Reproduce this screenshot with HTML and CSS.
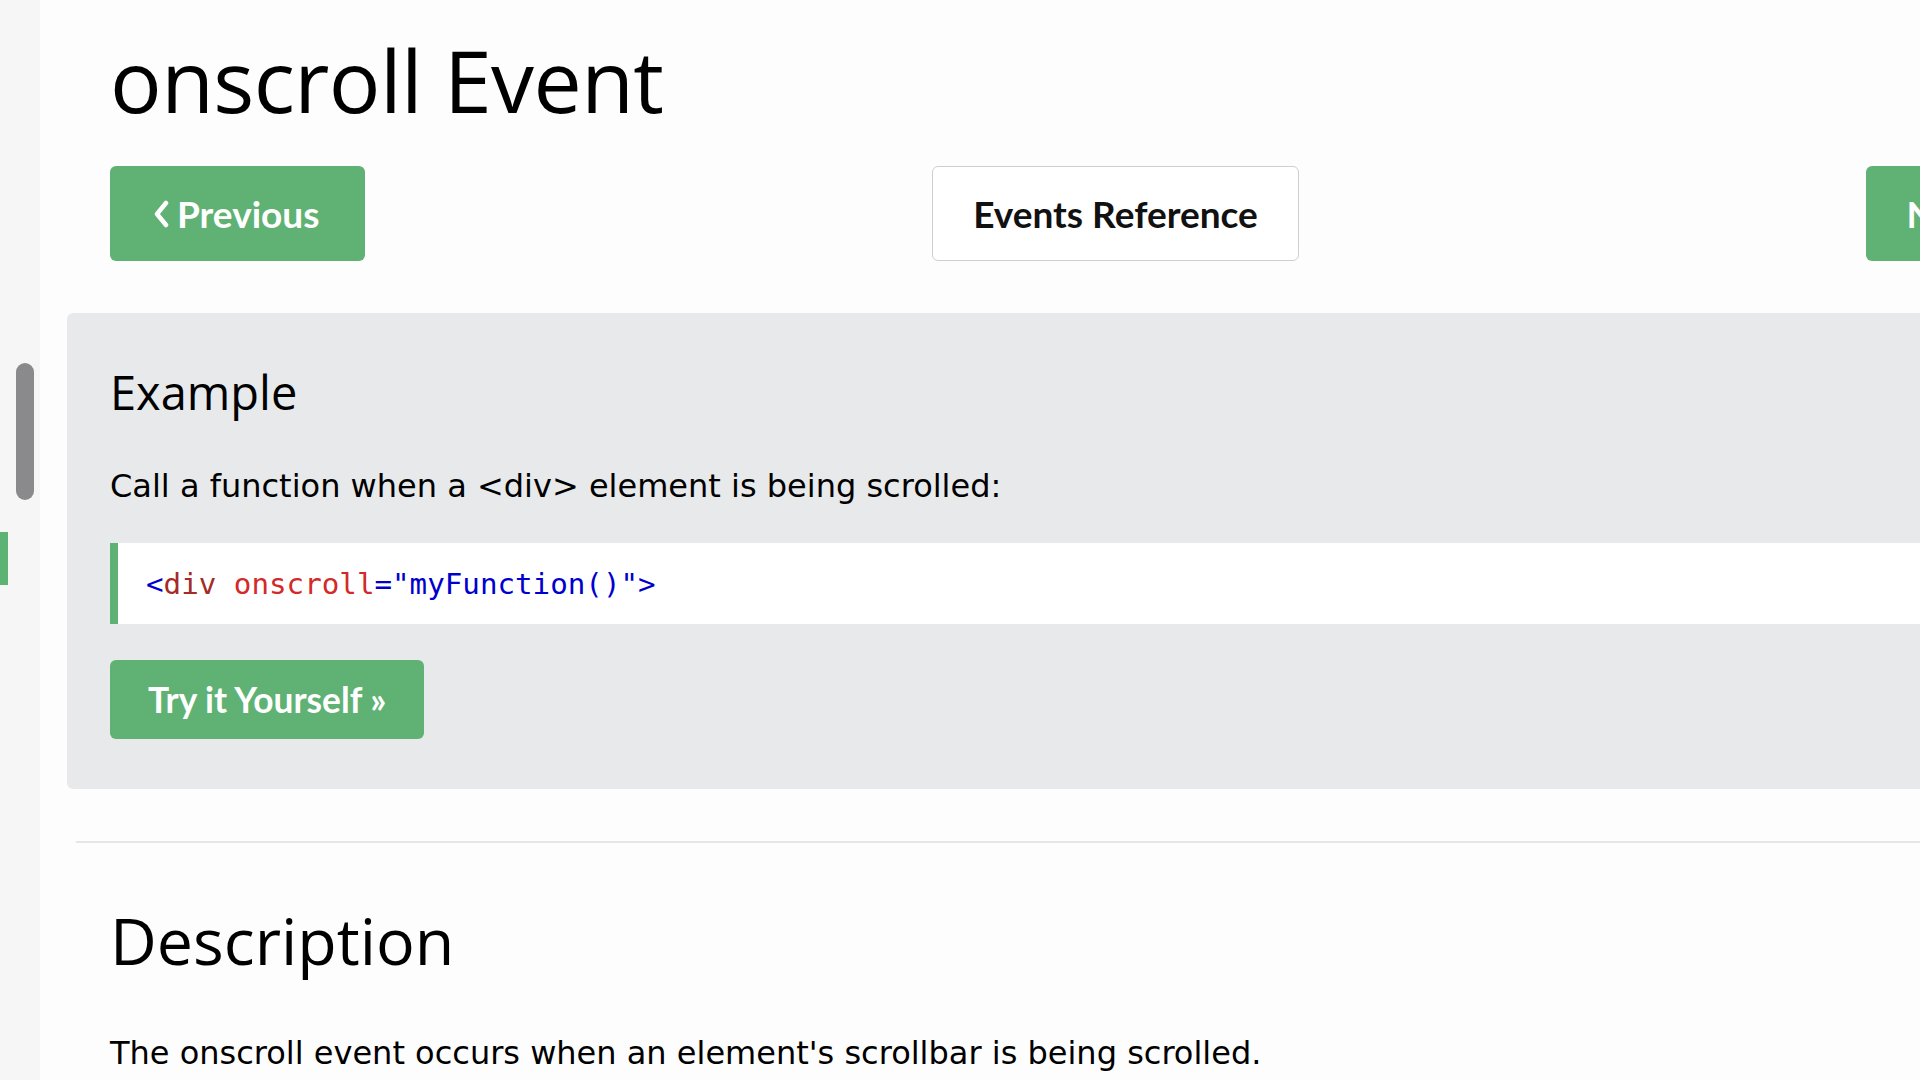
FILE: index.html
```html
<!DOCTYPE html>
<html lang="en">
<head>
<meta charset="utf-8">
<title>onscroll Event</title>
<link rel="stylesheet" href="styles.css">
</head>
<body>
<div class="page">
  <aside class="sidebar">
    <div class="thumb"></div>
    <div class="marker"></div>
  </aside>
  <main class="content">
    <h1 class="title">onscroll Event</h1>
    <div class="navrow">
      <a class="btn btn-green nav-prev"><svg class="chev" viewBox="0 0 18 28" width="18" height="28"><polyline points="14,3 5,14 14,25" fill="none" stroke="#fff" stroke-width="4.5" stroke-linecap="round" stroke-linejoin="round"/></svg>Previous</a>
      <a class="btn btn-white">Events Reference</a>
      <a class="btn btn-green nav-next">Next<svg class="chev chev-r" viewBox="0 0 18 28" width="18" height="28"><polyline points="4,3 13,14 4,25" fill="none" stroke="#fff" stroke-width="4.5" stroke-linecap="round" stroke-linejoin="round"/></svg></a>
    </div>
    <section class="example">
      <h2 class="ex-title">Example</h2>
      <p class="text ex-text">Call a function when a &lt;div&gt; element is being scrolled:</p>
      <div class="code"><span class="t-br">&lt;</span><span class="t-tag">div</span><span class="t-attr"> onscroll</span><span class="t-val">="myFunction()"</span><span class="t-br">&gt;</span></div>
      <a class="btn btn-green try">Try it Yourself »</a>
    </section>
    <hr class="rule">
    <h2 class="sec-title">Description</h2>
    <p class="text desc">The onscroll event occurs when an element's scrollbar is being scrolled.</p>
  </main>
</div>
</body>
</html>
```
FILE: styles.css
```css
html, body {
  margin: 0;
  padding: 0;
  height: 100%;
  overflow: hidden;
  background: #fdfdfd;
  color: #000;
}
.page {
  display: flex;
  height: 1080px;
  overflow: hidden;
}
.sidebar {
  flex: 0 0 40px;
  background: #f6f6f6;
  padding-top: 363px;
  box-sizing: border-box;
}
.thumb {
  width: 18px;
  height: 137px;
  margin-left: 16px;
  border-radius: 9px;
  background: #8a898b;
}
.marker {
  width: 8px;
  height: 53px;
  margin-top: 32px;
  background: #5db373;
}
.content {
  flex: 0 0 2030px;
  margin-left: 27px;
}
.title {
  margin: 30px 0 0 43px;
  font-family: "Open Sans", "Noto Sans", sans-serif;
  font-weight: 400;
  font-size: 86px;
  line-height: 100px;
  letter-spacing: -0.6px;
}
.navrow {
  display: flex;
  justify-content: space-between;
  margin: 36px 43px 0 43px;
}
.btn {
  display: inline-flex;
  align-items: center;
  box-sizing: border-box;
  font-family: Lato, "Open Sans", sans-serif;
  font-weight: 700;
  text-decoration: none;
  border-radius: 6px;
  white-space: nowrap;
}
.btn-green {
  background: #5fb274;
  color: #fff;
}
.btn-white {
  background: #fff;
  color: #111;
  border: 1.5px solid #cfcfcf;
}
.navrow .btn {
  height: 95px;
  font-size: 37px;
}
.nav-prev {
  padding: 0 46px 0 42px;
}
.nav-next {
  padding: 0 42px 0 41px;
}
.navrow .btn-white {
  padding: 0 40px;
}
.chev {
  margin-right: 7px;
}
.chev-r {
  margin-left: 7px;
  margin-right: 0;
}
.example {
  margin-top: 52px;
  background: #e7e9eb;
  border-radius: 6px;
  padding: 51px 43px 50px 43px;
}
.ex-title {
  margin: 0;
  font-family: "Open Sans", "Noto Sans", sans-serif;
  font-weight: 400;
  font-size: 47px;
  line-height: 56px;
}
.text {
  font-family: "DejaVu Sans", Verdana, sans-serif;
  font-size: 32px;
  line-height: 40px;
  margin: 0;
}
.ex-text {
  margin-top: 46px;
}
.code {
  margin-top: 37px;
  background: #fff;
  border-left: 8px solid #5fb274;
  padding: 21px 20px 20px 28px;
  font-family: "DejaVu Sans Mono", "Liberation Mono", monospace;
  font-size: 29.2px;
  line-height: 40px;
  white-space: pre;
}
.t-br { color: #0000cd; }
.t-tag { color: #a52a2a; }
.t-attr { color: #d22a2a; }
.t-val { color: #0000cd; }
.try {
  margin-top: 36px;
  height: 79px;
  padding: 0 38px;
  font-size: 35.3px;
}
.rule {
  margin: 52px 0 0 9px;
  border: 0;
  border-top: 2px solid #e6e6e6;
  height: 0;
}
.sec-title {
  margin: 57px 0 0 43px;
  font-family: "Open Sans", "Noto Sans", sans-serif;
  font-weight: 400;
  font-size: 64.5px;
  line-height: 80px;
}
.desc {
  margin: 53px 0 0 43px;
}
```
